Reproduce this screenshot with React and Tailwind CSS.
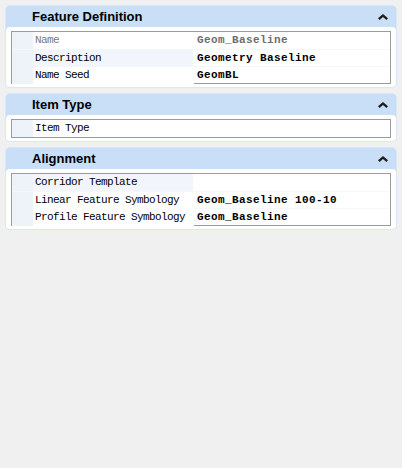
import React from "react";

const sections = [
  {
    title: "Feature Definition",
    rows: [
      { label: "Name", value: "Geom_Baseline", muted: true },
      { label: "Description", value: "Geometry Baseline", shade: true },
      { label: "Name Seed", value: "GeomBL" },
    ],
  },
  {
    title: "Item Type",
    rows: [{ label: "Item Type", value: "" }],
  },
  {
    title: "Alignment",
    rows: [
      { label: "Corridor Template", value: "", shade: true },
      { label: "Linear Feature Symbology", value: "Geom_Baseline 100-10" },
      { label: "Profile Feature Symbology", value: "Geom_Baseline" },
    ],
  },
];

const Chevron = () => (
  <svg width="10" height="6" viewBox="0 0 10 6" className="block">
    <path d="M0 4.2 L5 0 L10 4.2 L8.4 6 L5 2.9 L1.6 6 Z" fill="#1f1f1f" />
  </svg>
);

const Section = ({ title, rows }) => {
  return (
    <div className="mx-[5px] rounded-[5px] bg-[#c9def7] border border-[#d9e7f9]">
      {/* Header */}
      <div className="h-[21px] flex items-center justify-between pl-[26px] pr-[8px]">
        <span className="font-['Liberation_Sans',Arial,sans-serif] font-bold text-[13px] text-black leading-none">
          {title}
        </span>
        <Chevron />
      </div>

      {/* Body */}
      <div className="bg-white rounded-[4px] px-[5px] pt-[4px] pb-[3px]">
        <div className="border border-[#9c9c9c]">
          {rows.map((r, i) => (
            <div
              key={r.label}
              className={
                "grid grid-cols-[21px_160px_1fr] h-[17px] " +
                (i > 0 ? "border-t border-[#f4f7fb]" : "")
              }
            >
              <div className="bg-[#eef3fa]" />
              <div
                className={
                  "flex items-center pl-[2px] font-['Liberation_Mono','DejaVu_Sans_Mono',monospace] text-[11px] tracking-[-0.6px] whitespace-nowrap " +
                  (r.shade ? "bg-[#f2f6fc] " : "bg-white ") +
                  (r.muted ? "text-[#7a7a7a]" : "text-black")
                }
              >
                {r.label}
              </div>
              <div
                className={
                  "flex items-center pl-[3px] border-l border-white font-['Liberation_Mono','DejaVu_Sans_Mono',monospace] font-bold text-[11px] tracking-[0.4px] whitespace-nowrap " +
                  (r.muted ? "text-[#6e6e6e]" : "text-black")
                }
              >
                {r.value}
              </div>
            </div>
          ))}
        </div>
      </div>
    </div>
  );
};

export default function App() {
  return (
    <div className="w-[402px] h-[468px] bg-[#f0f0f0] pt-[5px] flex flex-col gap-[5px]">
      {sections.map((s) => (
        <Section key={s.title} title={s.title} rows={s.rows} />
      ))}
    </div>
  );
}
